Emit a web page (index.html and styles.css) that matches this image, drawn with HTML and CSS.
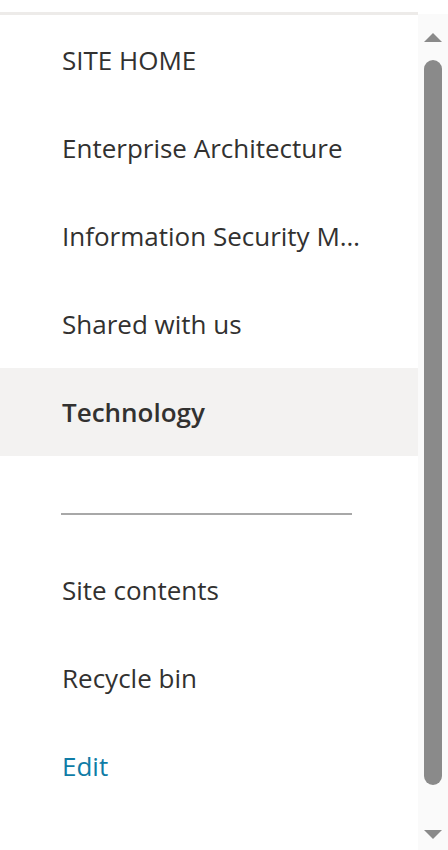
FILE: index.html
```html
<!DOCTYPE html>
<html lang="en">
<head>
<meta charset="utf-8">
<title>Site navigation</title>
<link rel="stylesheet" href="styles.css">
</head>
<body>
<div class="panel">
  <nav class="nav">
    <ul class="nav-list">
      <li class="nav-item"><a class="nav-link">SITE HOME</a></li>
      <li class="nav-item"><a class="nav-link">Enterprise Architecture</a></li>
      <li class="nav-item"><a class="nav-link">Information Security M…</a></li>
      <li class="nav-item"><a class="nav-link">Shared with us</a></li>
      <li class="nav-item is-selected"><a class="nav-link">Technology</a></li>
    </ul>
    <div class="separator"><hr class="separator-line"></div>
    <ul class="nav-list">
      <li class="nav-item"><a class="nav-link">Site contents</a></li>
      <li class="nav-item"><a class="nav-link">Recycle bin</a></li>
      <li class="nav-item"><a class="nav-link edit-link">Edit</a></li>
    </ul>
  </nav>
  <div class="scrollbar">
    <span class="arrow arrow-up"></span>
    <span class="thumb"></span>
    <span class="arrow arrow-down"></span>
  </div>
</div>
</body>
</html>
```
FILE: styles.css
```css
html, body {
  margin: 0;
  padding: 0;
  background: #ffffff;
}

body {
  font-family: "Open Sans", "Noto Sans", sans-serif;
  color: #323130;
}

.panel {
  display: grid;
  grid-template-columns: 418px 30px;
  height: 850px;
  padding-top: 12px;
  box-sizing: border-box;
}

.nav {
  border-top: 3px solid #edebe9;
  padding-top: 1px;
}

.nav-list {
  list-style: none;
  margin: 0;
  padding: 0;
}

.nav-item {
  height: 88px;
  display: flex;
  align-items: center;
  padding-left: 62px;
}

.nav-link {
  font-size: 26px;
  white-space: nowrap;
  color: #323130;
}

.is-selected {
  background: #f3f2f1;
}

.is-selected .nav-link {
  font-weight: 600;
}

.edit-link {
  color: #0f7ca6;
}

.separator {
  height: 90px;
  padding: 57px 66px 0 61px;
  box-sizing: border-box;
}

.separator-line {
  margin: 0;
  border: 0;
  height: 2px;
  background: #a8a8a8;
}

.scrollbar {
  margin-top: 2px;
  background: #fafafa;
  display: flex;
  flex-direction: column;
  align-items: center;
  padding: 19px 0 11px;
}

.arrow {
  width: 0;
  height: 0;
  border-left: 9px solid transparent;
  border-right: 9px solid transparent;
}

.arrow-up {
  border-bottom: 9px solid #8a8a8a;
}

.arrow-down {
  border-top: 9px solid #8a8a8a;
}

.thumb {
  width: 18px;
  height: 725px;
  margin: 18px 0 45px;
  background: #8a8a8a;
  border-radius: 9px;
}
```
